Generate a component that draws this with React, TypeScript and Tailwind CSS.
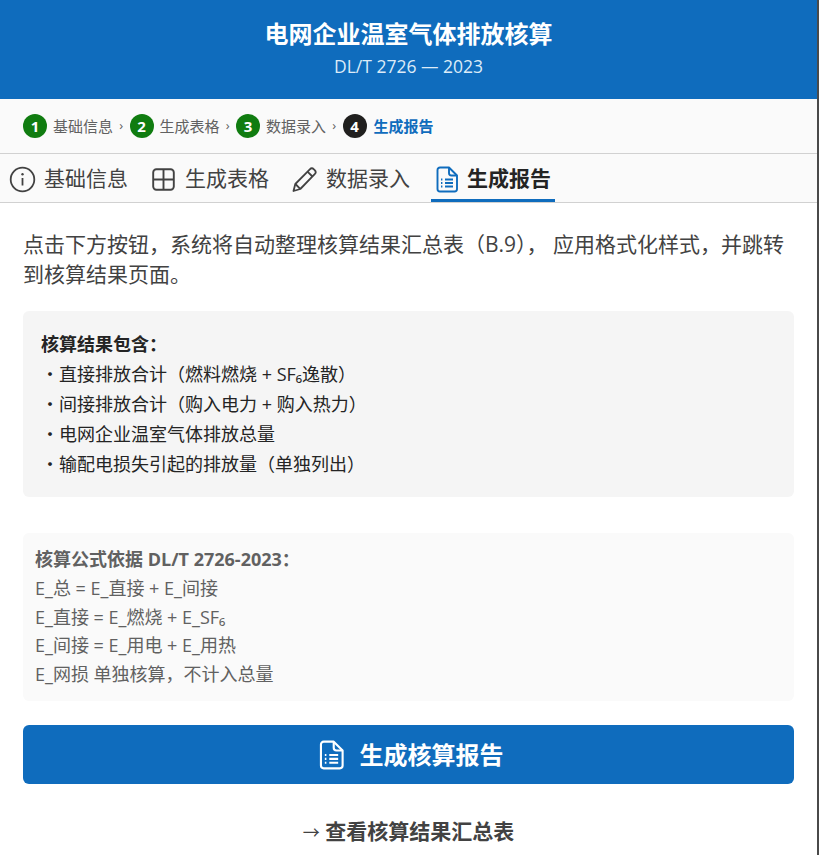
import type { ReactNode } from "react";

const CJK = "font-['Open_Sans','Noto_Sans_CJK_SC',sans-serif]";

function InfoIcon() {
  return (
    <svg viewBox="0 0 27 27" fill="none" stroke="currentColor" strokeWidth="1.8" className="h-[27px] w-[27px]">
      <circle cx="13.5" cy="13.5" r="11.8" />
      <path d="M13.5 12v7.5" />
      <circle cx="13.5" cy="8.3" r="1.2" fill="currentColor" stroke="none" />
    </svg>
  );
}

function GridIcon() {
  return (
    <svg viewBox="0 0 27 27" fill="none" stroke="currentColor" strokeWidth="1.9" className="h-[27px] w-[27px]">
      <rect x="3.2" y="3.2" width="20.6" height="20.6" rx="3.2" />
      <path d="M13.5 3.2v20.6M3.2 13.5h20.6" />
    </svg>
  );
}

function PencilIcon() {
  return (
    <svg viewBox="0 0 27 27" fill="none" stroke="currentColor" strokeWidth="1.8" strokeLinejoin="round" className="h-[27px] w-[27px]">
      <path d="M2.5 25l1.8-7L18.8 3.3a2.9 2.9 0 0 1 4.1 0l.8.8a2.9 2.9 0 0 1 0 4.1L9.3 23l-6.8 2z" />
      <path d="M16.5 5.6l4.9 4.9M4.4 18l4.8 4.9" />
    </svg>
  );
}

function DocIcon({ className }: { className: string }) {
  return (
    <svg viewBox="0 0 24 27" fill="none" stroke="currentColor" strokeWidth="1.9" strokeLinejoin="round" className={className}>
      <path d="M5 1.5h9l8 8V23a2.5 2.5 0 0 1-2.5 2.5H5A2.5 2.5 0 0 1 2.5 23V4A2.5 2.5 0 0 1 5 1.5z" />
      <path d="M14 1.5V7a2.5 2.5 0 0 0 2.5 2.5H22" />
      <path d="M6 13.5h1.4M10 13.5h8M6 17h1.4M10 17h8M6 20.5h1.4M10 20.5h8" />
    </svg>
  );
}

function Step({ n, label, active, done }: { n: number; label: string; active?: boolean; done?: boolean }) {
  return (
    <div className="flex items-center gap-[6px]">
      <span className={`flex h-6 w-6 items-center justify-center rounded-full text-[15px] font-bold text-white ${done ? "bg-[#107c10]" : "bg-[#201f1e]"}`}>{n}</span>
      <span className={`text-[15px] ${active ? "ml-px font-bold text-[#0f6cbd]" : "text-[#616161]"}`}>{label}</span>
    </div>
  );
}

function Chevron() {
  return <span className="text-[13px] text-[#616161]">›</span>;
}

function Tab({ icon, label, active }: { icon: ReactNode; label: string; active?: boolean }) {
  return (
    <div className={`flex h-[48px] items-center gap-[8px] border-b-[3px] px-1 pt-[5px] ${active ? "ml-[3px] border-[#0f6cbd] font-semibold text-[#242424]" : "border-transparent text-[#424242]"}`}>
      {icon}
      <span className="text-[21px]">{label}</span>
    </div>
  );
}

export default function App() {
  return (
    <div className={`h-[855px] w-[819px] overflow-hidden border-r-2 border-[#4a4a4a] bg-white ${CJK}`}>
      <header className="flex h-[99px] flex-col items-center bg-[#0f6cbd] pt-[17px] text-white">
        <h1 className="text-2xl font-bold leading-[34px]">电网企业温室气体排放核算</h1>
        <p className="mt-[3px] text-[17.5px] leading-[24px] text-[#dcebf8]">DL/T 2726 — 2023</p>
      </header>
      <div className="flex h-[55px] items-center gap-[6.3px] border-b border-[#d1d1d1] bg-[#fafafa] px-[23px]">
        <Step n={1} label="基础信息" done /><Chevron />
        <Step n={2} label="生成表格" done /><Chevron />
        <Step n={3} label="数据录入" done /><Chevron />
        <Step n={4} label="生成报告" active />
      </div>
      <nav className="flex h-[49px] items-start gap-[14px] border-b border-[#d1d1d1] bg-[#fafafa] px-[5px]">
        <Tab icon={<InfoIcon />} label="基础信息" />
        <Tab icon={<GridIcon />} label="生成表格" />
        <Tab icon={<PencilIcon />} label="数据录入" />
        <Tab icon={<DocIcon className="h-[27px] w-6 text-[#0f6cbd]" />} label="生成报告" active />
      </nav>
      <main className="px-[23px] pt-[26px]">
        <p className="text-[21px] leading-[30px] text-[#424242]">点击下方按钮，系统将自动整理核算结果汇总表（B.9）， 应用格式化样式，并跳转到核算结果页面。</p>
        <section className="mt-[22px] h-[186px] rounded-md bg-[#f5f5f5] px-[18px] pt-[18px] text-lg leading-[30px] text-[#242424]">
          <p className="font-bold">核算结果包含：</p>
          <p>・直接排放合计（燃料燃烧 + SF₆逸散）</p>
          <p>・间接排放合计（购入电力 + 购入热力）</p>
          <p>・电网企业温室气体排放总量</p>
          <p>・输配电损失引起的排放量（单独列出）</p>
        </section>
        <section className="mt-9 h-[168px] rounded-md bg-[#fafafa] px-3 pt-[12px] text-lg leading-[28.8px] text-[#616161]">
          <p className="font-bold">核算公式依据 DL/T 2726-2023：</p>
          <p>E_总 = E_直接 + E_间接</p>
          <p>E_直接 = E_燃烧 + E_SF₆</p>
          <p>E_间接 = E_用电 + E_用热</p>
          <p>E_网损 单独核算，不计入总量</p>
        </section>
        <button className="mt-6 flex h-[59px] w-full items-center justify-center gap-[15px] rounded-md bg-[#0f6cbd] pl-1 text-2xl font-bold text-white">
          <DocIcon className="h-[30px] w-[27px]" />
          生成核算报告
        </button>
        <p className="mt-8 text-center text-[21px] font-bold leading-[30px] text-[#424242]"><span className="text-[17px] font-normal">→</span> 查看核算结果汇总表</p>
      </main>
    </div>
  );
}
